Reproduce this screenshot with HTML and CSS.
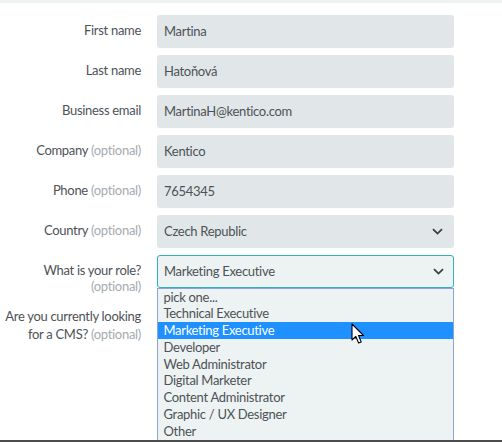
FILE: index.html
```html
<!DOCTYPE html>
<html>
<head>
<meta charset="utf-8">
<link rel="stylesheet" href="styles.css">
</head>
<body>
<div class="topbar"></div>
<form class="form">
  <div class="row">
    <label class="label">First name</label>
    <div class="field">Martina</div>
  </div>
  <div class="row">
    <label class="label">Last name</label>
    <div class="field">Hatoňová</div>
  </div>
  <div class="row">
    <label class="label">Business email</label>
    <div class="field">MartinaH@kentico.com</div>
  </div>
  <div class="row">
    <label class="label">Company <span class="opt">(optional)</span></label>
    <div class="field">Kentico</div>
  </div>
  <div class="row">
    <label class="label">Phone <span class="opt">(optional)</span></label>
    <div class="field">7654345</div>
  </div>
  <div class="row">
    <label class="label">Country <span class="opt">(optional)</span></label>
    <div class="field select">Czech Republic
      <svg class="chev" width="11" height="7" viewBox="0 0 11 7"><path d="M1 1.2 L5.5 5.6 L10 1.2" fill="none" stroke="#3a3f44" stroke-width="1.8"/></svg>
    </div>
  </div>
  <div class="row">
    <label class="label">What is your role?<br><span class="opt">(optional)</span></label>
    <div class="field select focus">Marketing Executive
      <svg class="chev" width="11" height="7" viewBox="0 0 11 7"><path d="M1 1.2 L5.5 5.6 L10 1.2" fill="none" stroke="#3a3f44" stroke-width="1.8"/></svg>
      <ul class="list">
        <li>pick one...</li>
        <li>Technical Executive</li>
        <li class="sel">Marketing Executive</li>
        <li>Developer</li>
        <li>Web Administrator</li>
        <li>Digital Marketer</li>
        <li>Content Administrator</li>
        <li>Graphic / UX Designer</li>
        <li>Other</li>
      </ul>
      <svg class="cursor" width="14" height="22" viewBox="0 0 14 22"><path d="M1 1 L1 17 L4.8 13.4 L7.6 20 L10.2 18.9 L7.5 12.5 L12.5 12.5 Z" fill="#fff" stroke="#000" stroke-width="1.1" stroke-linejoin="round"/></svg>
    </div>
  </div>
  <div class="row">
    <label class="label cms">Are you currently looking<br>for a CMS? <span class="opt">(optional)</span></label>
    <div class="field"></div>
  </div>
</form>
<div class="bottomline"></div>
</body>
</html>
```
FILE: styles.css
```css
* { box-sizing: border-box; }
html, body { margin: 0; padding: 0; }
body {
  width: 502px;
  height: 442px;
  overflow: hidden;
  background: #fff;
  font-family: Lato, "Open Sans", sans-serif;
  font-size: 13px;
  letter-spacing: -0.3px;
  color: #4d5257;
  position: relative;
}
.topbar {
  height: 3px;
  background: #eef1f1;
}
.form {
  padding-top: 12px;
  display: flex;
  flex-direction: column;
  gap: 7px;
}
.row {
  display: grid;
  grid-template-columns: 157px 297px;
}
.label {
  text-align: right;
  padding-top: 7px;
  padding-right: 16px;
  line-height: 16px;
  color: #4d5257;
  white-space: nowrap;
}
.opt { color: #a6abaf; }
.label.cms { padding-top: 6px; line-height: 18px; }
.field {
  position: relative;
  height: 33px;
  background: #e1e7e8;
  border-radius: 3px;
  padding: 0 7px;
  line-height: 33px;
  color: #4d5257;
}
.field.select .chev {
  position: absolute;
  right: 11px;
  top: 13px;
}
.field.focus {
  background: #edf2f2;
  border: 1.5px solid #2db2bf;
  line-height: 30px;
  padding: 0 6px;
}
.field.focus .chev { top: 11.5px; right: 9.5px; }
.list {
  position: absolute;
  left: -1.5px;
  top: 31.5px;
  width: 297px;
  margin: 0;
  padding: 0;
  list-style: none;
  background: #edf2f2;
  border: 1px solid #8aa5d6;
  z-index: 2;
}
.list li {
  height: 16.8px;
  line-height: 16.8px;
  padding-left: 6px;
  color: #4d5257;
}
.list li.sel {
  background: #1e90ff;
  color: #fff;
}
.cursor {
  position: absolute;
  left: 193px;
  top: 67px;
  z-index: 3;
}
.bottomline {
  position: absolute;
  left: 0;
  right: 0;
  bottom: 0;
  height: 2px;
  background: #4c4c4c;
  z-index: 5;
}
```
